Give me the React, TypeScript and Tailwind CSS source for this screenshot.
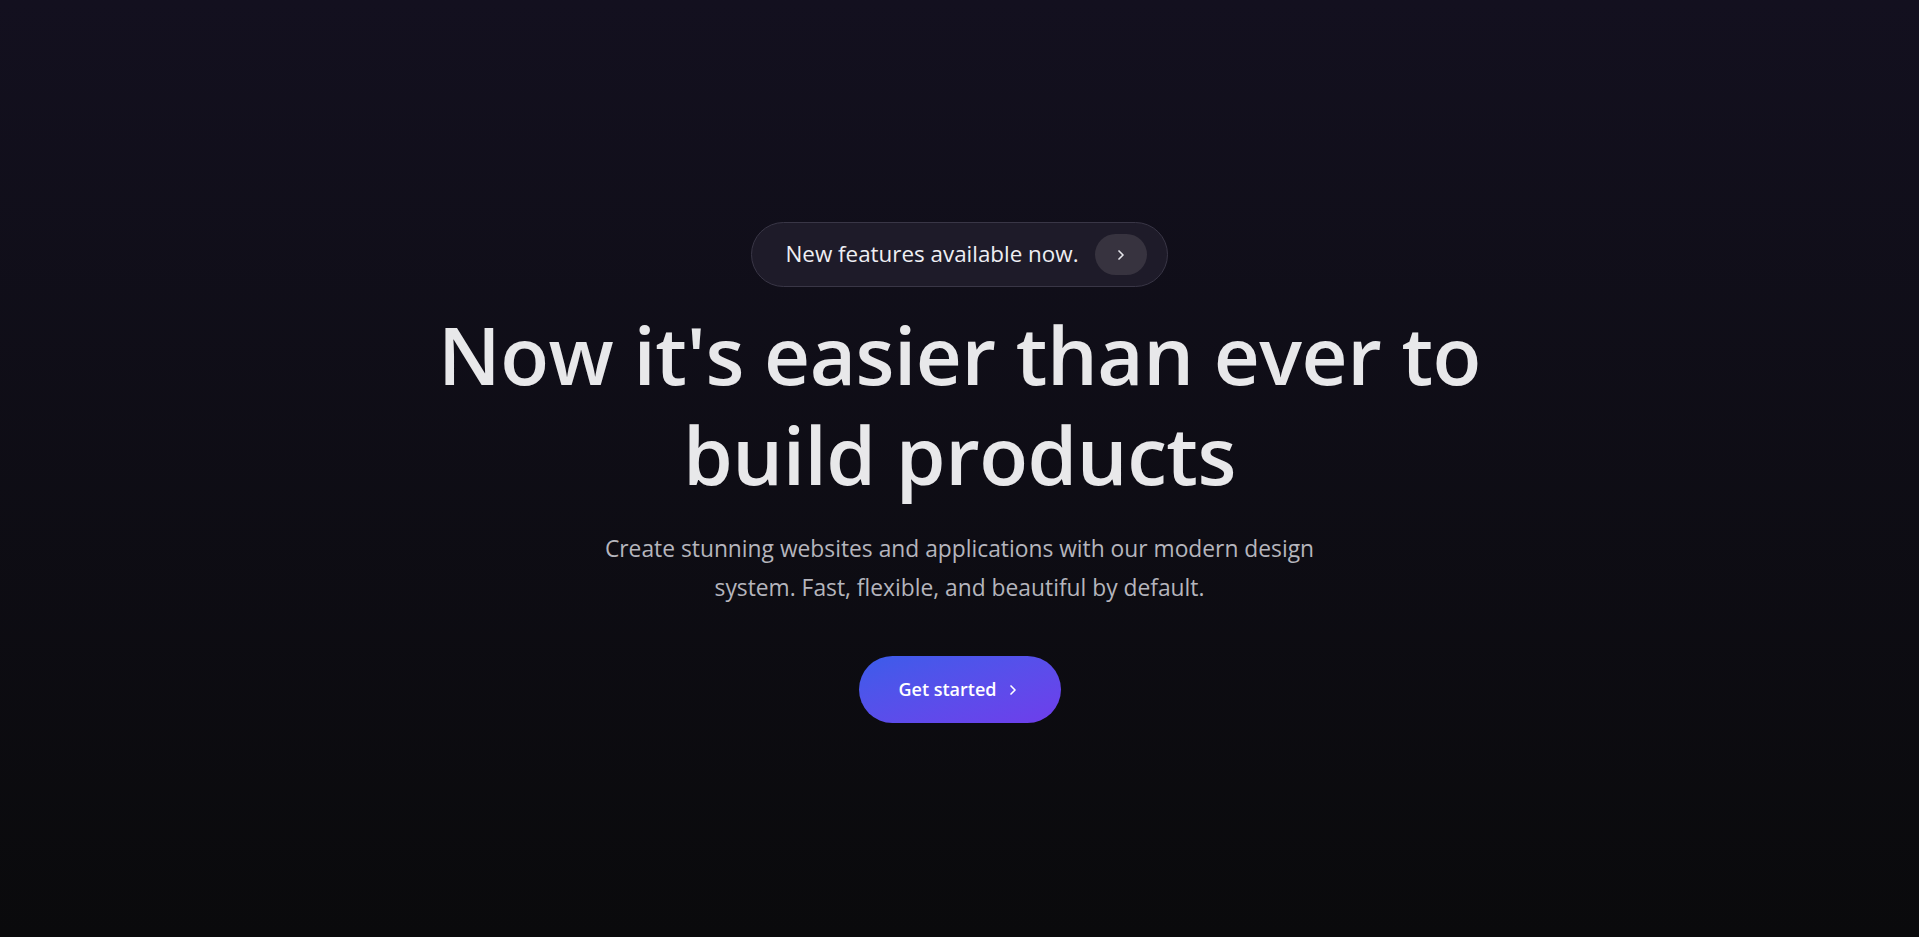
import React from 'react';
import { ChevronRight } from 'lucide-react';

const App = () => {
  return (
    <div className="min-h-screen w-full bg-gradient-to-b from-[#13101f] to-[#0a0a0c] flex flex-col items-center justify-center pt-[8px] font-['Segoe_UI','Open_Sans',sans-serif] text-center">
      {/* announcement pill */}
      <a
        href="#"
        className="flex items-center gap-[16px] rounded-full border border-[#393646] bg-[#1e1b29] pl-[33px] pr-[20px] py-[11px]"
      >
        <span className="text-[22.4px] text-[#eeeef3] leading-none">New features available now.</span>
        <span className="flex h-[41px] w-[52px] items-center justify-center rounded-full bg-[#37333f]">
          <ChevronRight size={16} strokeWidth={2.5} className="text-[#e5e5ea]" />
        </span>
      </a>

      <h1 className="mt-[17px] max-w-[1100px] text-[80px] font-semibold leading-[100px] text-[#e8e8ea] tracking-[-0.5px]">
        Now it's easier than ever to
        <br />
        build products
      </h1>

      <p className="mt-[25px] max-w-[720px] text-[22.8px] leading-[39px] text-[#b5b5bd]">
        Create stunning websites and applications with our modern design system. Fast, flexible, and beautiful by default.
      </p>

      <a
        href="#"
        className="mt-[49px] flex h-[67px] w-[202px] items-center justify-center gap-[8px] rounded-full bg-gradient-to-br from-[#3a5cea] to-[#6e3deb] text-[18px] font-semibold text-white"
      >
        Get started
        <ChevronRight size={16} strokeWidth={2.5} />
      </a>
    </div>
  );
};

export default App;
